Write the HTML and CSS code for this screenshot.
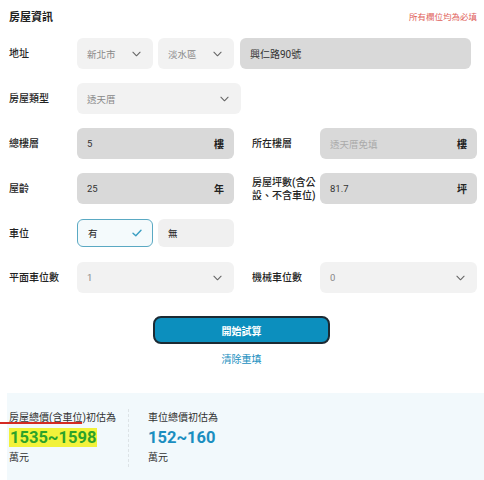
FILE: index.html
```html
<html>
    <head>
        <title>房屋資訊</title>
        <link rel="stylesheet" href="styles.css">
    </head>
    <body>
        <div class="form">
            <div class="head">
                <h3>房屋資訊</h3>
                <span class="required">所有欄位均為必填</span>
            </div>

            <div class="row">
                <label class="lbl">地址</label>
                <div class="box select sm">新北市 <svg class="chev" viewBox="0 0 10 6"><path d="M1 1 L5 5 L9 1"/></svg></div>
                <div class="box select sm">淡水區 <svg class="chev" viewBox="0 0 10 6"><path d="M1 1 L5 5 L9 1"/></svg></div>
                <div class="box input addr">興仁路90號</div>
            </div>

            <div class="row">
                <label class="lbl">房屋類型</label>
                <div class="box select type">透天厝 <svg class="chev" viewBox="0 0 10 6"><path d="M1 1 L5 5 L9 1"/></svg></div>
            </div>

            <div class="row two">
                <div class="half">
                    <label class="lbl">總樓層</label>
                    <div class="box input"><span class="val">5</span><b>樓</b></div>
                </div>
                <div class="half">
                    <label class="lbl">所在樓層</label>
                    <div class="box input"><span class="ph">透天厝免填</span><b>樓</b></div>
                </div>
            </div>

            <div class="row two">
                <div class="half">
                    <label class="lbl">屋齡</label>
                    <div class="box input"><span class="val">25</span><b>年</b></div>
                </div>
                <div class="half">
                    <label class="lbl">房屋坪數(含公<br>設、不含車位)</label>
                    <div class="box input"><span class="val">81.7</span><b>坪</b></div>
                </div>
            </div>

            <div class="row park">
                <label class="lbl">車位</label>
                <div class="box opt on">有
                    <svg width="10" height="8" viewBox="0 0 10 8"><path d="M1 4.2 L3.8 6.8 L9 1.2" fill="none" stroke="#3a9ec2" stroke-width="1.4" stroke-linecap="round" stroke-linejoin="round"/></svg>
                </div>
                <div class="box opt">無</div>
            </div>

            <div class="row two">
                <div class="half">
                    <label class="lbl">平面車位數</label>
                    <div class="box select">1 <svg class="chev" viewBox="0 0 10 6"><path d="M1 1 L5 5 L9 1"/></svg></div>
                </div>
                <div class="half">
                    <label class="lbl">機械車位數</label>
                    <div class="box select">0 <svg class="chev" viewBox="0 0 10 6"><path d="M1 1 L5 5 L9 1"/></svg></div>
                </div>
            </div>

            <div class="actions">
                <button class="btn">開始試算</button>
                <a class="reset">清除重填</a>
            </div>
        </div>

        <div class="result">
            <div class="col">
                <p class="cap"><span class="mark">房屋總價(含車位</span>)初估為</p>
                <p class="num green"><span>1535~1598</span></p>
                <p class="unit">萬元</p>
            </div>
            <div class="col second">
                <p class="cap">車位總價初估為</p>
                <p class="num blue">152~160</p>
                <p class="unit">萬元</p>
            </div>
        </div>
    </body>
</html>
```

FILE: styles.css
```css
body {
    margin: 0;
    background: #fff;
    font-family: Roboto, "Noto Sans CJK TC", sans-serif;
    color: #333;
    font-size: 10px;
}
.form {
    padding: 0 7px 0 9px;
}
.head {
    display: flex;
    justify-content: space-between;
    align-items: center;
    height: 30px;
    padding-top: 1px;
}
.head h3 {
    margin: 0;
    font-size: 11px;
    font-weight: bold;
    color: #222;
}
.required {
    font-size: 8.5px;
    color: #e0605a;
}
.row {
    display: flex;
    align-items: center;
    margin-top: 7px;
    height: 31px;
}
.row + .row {
    margin-top: 14px;
}
.lbl {
    width: 68px;
    flex: none;
    font-size: 10px;
    font-weight: 500;
    color: #222;
    line-height: 1.3;
}
.box + .box {
    margin-left: 5px;
}
.two {
    gap: 18px;
}
.half {
    display: flex;
    align-items: center;
    width: 225px;
}
.half .box {
    width: 157px;
}
.box {
    box-sizing: border-box;
    height: 31px;
    border-radius: 6px;
    display: flex;
    align-items: center;
    justify-content: space-between;
    padding: 0 10px;
    font-size: 9.5px;
}
.select {
    background: #f2f2f2;
    color: #888;
}
.select.sm {
    width: 76px;
}
.select.type {
    width: 164px;
}
.input {
    background: #d9d9d9;
    color: #333;
}
.box.addr {
    margin-left: 6px;
    width: 231px;
    font-size: 10px;
}
.input b {
    font-size: 10px;
    color: #222;
}
.ph {
    color: #aaa;
}
.chev {
    width: 9px;
    height: 6px;
    margin-right: 2px;
}
.chev path {
    fill: none;
    stroke: #666;
    stroke-width: 1.2;
    stroke-linecap: round;
    stroke-linejoin: round;
}
.park {
    height: 30px;
}
.opt {
    width: 76px;
    height: 28px;
    background: #f0f0f0;
    color: #222;
}
.opt.on {
    background: #f4fafc;
    border: 1px solid #5aa9c3;
}
.actions {
    display: flex;
    flex-direction: column;
    align-items: center;
    margin-top: 23px;
    margin-left: -3px;
}
.btn {
    width: 177px;
    height: 28px;
    background: #0c8fbe;
    border: 2px solid #1c2a33;
    border-radius: 8px;
    color: #fff;
    font-weight: bold;
    font-size: 10px;
    font-family: inherit;
}
.reset {
    margin-top: 7px;
    color: #1a8fc0;
    font-size: 10px;
}
.result {
    margin: 27px 0 0 7px;
    height: 96px;
    background: #f2f9fc;
    display: flex;
    padding: 16px 0 0 2px;
    box-sizing: border-box;
}
.col {
    width: 119px;
    border-right: 1px dashed #dde3e6;
    height: 58px;
}
.col.second {
    border: none;
    padding-left: 19px;
}
.col p {
    margin: 0;
}
.cap {
    font-size: 10px;
    color: #333;
    height: 17px;
    line-height: 17px;
}
.mark {
    position: relative;
}
.mark::after {
    content: "";
    position: absolute;
    left: -9px;
    right: 0;
    bottom: -1px;
    border-bottom: 2px solid #d42a22;
}
.num {
    font-size: 16.5px;
    font-weight: bold;
    height: 23px;
    line-height: 23px;
}
.green span {
    background: #f2f23a;
    color: #2ca22a;
    padding: 0 1px;
}
.blue {
    color: #1b8ec0;
}
.unit {
    font-size: 10px;
    margin-top: 3px;
}
```
